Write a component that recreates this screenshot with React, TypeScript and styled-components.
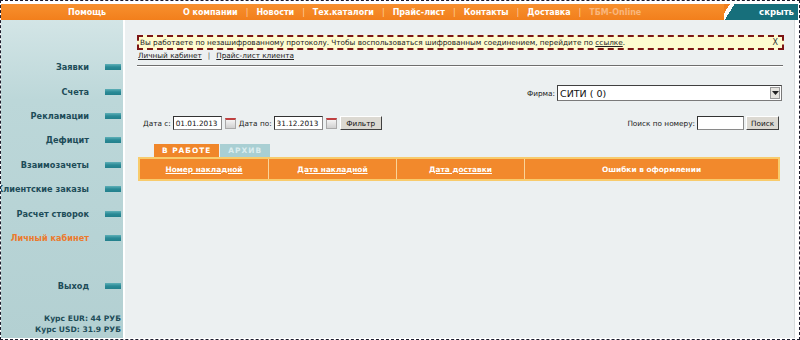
import React from "react";
import styled, { createGlobalStyle } from "styled-components";

const GlobalStyle = createGlobalStyle`
  html, body {
    margin: 0;
    padding: 0;
    background: #ffffff;
  }
  body {
    font-family: "DejaVu Sans", Verdana, sans-serif;
  }
`;

const menu = [
  "О компании",
  "Новости",
  "Тех.каталоги",
  "Прайс-лист",
  "Контакты",
  "Доставка",
];

const sideItems = [
  { title: "Заявки" },
  { title: "Счета" },
  { title: "Рекламации" },
  { title: "Дефицит" },
  { title: "Взаимозачеты" },
  { title: "Клиентские заказы" },
  { title: "Расчет створок" },
  { title: "Личный кабинет", active: true },
];

const columns = [
  { title: "Номер накладной", link: true },
  { title: "Дата накладной", link: true },
  { title: "Дата доставки", link: true },
  { title: "Ошибки в оформлении", link: false },
];

const App = () => {
  return (
    <>
      <GlobalStyle />
      <Frame>
        <TopBar>
          <HelpLink>Помощь</HelpLink>
          <Nav>
            {menu.map((item) => (
              <React.Fragment key={item}>
                <NavItem>{item}</NavItem>
                <NavSep>|</NavSep>
              </React.Fragment>
            ))}
            <NavItem faded>ТБМ-Online</NavItem>
          </Nav>
          <HideTab>скрыть</HideTab>
        </TopBar>

        <Body>
          <Sidebar>
            <SideList>
              {sideItems.map((item) => (
                <SideRow key={item.title}>
                  <SideText active={item.active}>{item.title}</SideText>
                  <Marker />
                </SideRow>
              ))}
              <SideGap />
              <SideRow>
                <SideText>Выход</SideText>
                <Marker />
              </SideRow>
            </SideList>
            <Rates>
              <div>Курс EUR: 44 РУБ</div>
              <div>Курс USD: 31.9 РУБ</div>
            </Rates>
          </Sidebar>

          <Content>
            <Warning>
              <span>
                Вы работаете по незашифрованному протоколу. Чтобы
                воспользоваться шифрованным соединением, перейдите по{" "}
                <u>ссылке</u>.
              </span>
              <Close>X</Close>
            </Warning>

            <Links>
              <u>Личный кабинет</u>
              <LinkSep>|</LinkSep>
              <u>Прайс-лист клиента</u>
            </Links>
            <Rule />

            <FirmRow>
              <Label>Фирма:</Label>
              <Select>
                <span>СИТИ ( 0)</span>
                <SelectArrow>
                  <svg width="7" height="5" viewBox="0 0 7 5">
                    <path d="M0 0 L7 0 L3.5 4 Z" fill="#222" />
                  </svg>
                </SelectArrow>
              </Select>
            </FirmRow>

            <FilterRow>
              <Group>
                <Label>Дата с:</Label>
                <Input width={49}>01.01.2013</Input>
                <CalButton />
                <Label>Дата по:</Label>
                <Input width={49}>31.12.2013</Input>
                <CalButton />
                <Button width={42}>Фильтр</Button>
              </Group>
              <Group>
                <Label>Поиск по номеру:</Label>
                <Input width={47} />
                <Button width={33}>Поиск</Button>
              </Group>
            </FilterRow>

            <Tabs>
              <Tab active>В РАБОТЕ</Tab>
              <Tab>АРХИВ</Tab>
            </Tabs>
            <Table>
              {columns.map((col) => (
                <HeadCell key={col.title} link={col.link}>
                  {col.title}
                </HeadCell>
              ))}
            </Table>
          </Content>
        </Body>
      </Frame>
    </>
  );
};

export default App;

const Frame = styled.div`
  width: 800px;
  height: 340px;
  box-sizing: border-box;
  border: 1px dashed #1c1c2c;
  padding: 3px 1px 1px 0;
  display: flex;
  flex-direction: column;
  overflow: hidden;
`;

const TopBar = styled.div`
  height: 16px;
  display: flex;
  align-items: center;
  background: linear-gradient(#f7902e, #f27f1c);
  color: #ffffff;
  font-weight: bold;
  font-size: 8px;
`;

const HelpLink = styled.div`
  width: 182px;
  box-sizing: border-box;
  padding-left: 67px;
  flex-shrink: 0;
`;

const Nav = styled.div`
  flex: 1;
  display: flex;
  align-items: center;
  gap: 8px;
`;

const NavItem = styled.span<{ faded?: boolean }>`
  color: ${(p) => (p.faded ? "#f9b67c" : "#ffffff")};
  white-space: nowrap;
`;

const NavSep = styled.span`
  color: #fcd0a0;
  font-weight: normal;
`;

const HideTab = styled.div`
  width: 74px;
  height: 100%;
  box-sizing: border-box;
  padding-right: 4px;
  display: flex;
  align-items: center;
  justify-content: flex-end;
  background: linear-gradient(
    122deg,
    #f27f1c 0 5px,
    #ffffff 5px 9px,
    #176f7b 9px
  );
  font-size: 8.5px;
`;

const Body = styled.div`
  flex: 1;
  display: flex;
  min-height: 0;
`;

const Sidebar = styled.div`
  width: 124px;
  flex-shrink: 0;
  border-right: 2px solid #ffffff;
  background: linear-gradient(#d3e5e6 0, #bcd7d9 80px, #b3d0d2 100%);
  display: flex;
  flex-direction: column;
  justify-content: space-between;
  padding: 35px 0 3px;
  box-sizing: border-box;
`;

const SideList = styled.div`
  display: flex;
  flex-direction: column;
`;

const SideRow = styled.div`
  height: 24.4px;
  display: flex;
  align-items: center;
  justify-content: flex-end;
  gap: 16px;
  padding-right: 2px;
`;

const SideText = styled.span<{ active?: boolean }>`
  font-size: 8.2px;
  font-weight: bold;
  white-space: nowrap;
  color: ${(p) => (p.active ? "#ec7a2c" : "#1d4c58")};
`;

const Marker = styled.span`
  width: 16px;
  height: 6px;
  flex-shrink: 0;
  background: linear-gradient(#5fb0b8, #2a8a96 50%, #23808c);
`;

const SideGap = styled.div`
  height: 24px;
`;

const Rates = styled.div`
  text-align: right;
  padding-right: 2px;
  font-size: 7.6px;
  font-weight: bold;
  line-height: 11px;
  color: #1d4c58;
`;

const Content = styled.div`
  flex: 1;
  background: #ecf0f1;
  border-right: 1px solid #d6dbdc;
  margin-right: 3px;
  padding: 15px 10px 0 12px;
  display: flex;
  flex-direction: column;
  font-size: 7.3px;
  color: #222222;
`;

const Warning = styled.div`
  height: 15px;
  box-sizing: border-box;
  border: 2px dashed #7c1414;
  background: #fdfbcf;
  display: flex;
  align-items: center;
  justify-content: space-between;
  padding: 0 4px 0 1px;
  white-space: nowrap;
`;

const Close = styled.span`
  font-size: 8px;
  color: #333;
`;

const Links = styled.div`
  display: flex;
  align-items: center;
  height: 10px;
  padding-left: 1px;
  color: #222;
`;

const LinkSep = styled.span`
  margin: 0 6px;
  color: #555;
`;

const Rule = styled.div`
  height: 1px;
  background: #6e6e6e;
  margin-top: 5px;
  margin-right: 1px;
  box-shadow: 0 1px 0 #ffffff;
`;

const FirmRow = styled.div`
  display: flex;
  justify-content: flex-end;
  align-items: center;
  gap: 2px;
  margin-top: 19px;
  padding-right: 2px;
`;

const Label = styled.span`
  white-space: nowrap;
`;

const Select = styled.div`
  width: 225px;
  height: 16px;
  box-sizing: border-box;
  background: #ffffff;
  border: 1px solid #7a7a7a;
  border-top-color: #404040;
  border-left-color: #404040;
  display: flex;
  align-items: center;
  justify-content: space-between;
  padding: 0 1px 0 2px;
  font-size: 9.5px;
  color: #111;
`;

const SelectArrow = styled.span`
  width: 10px;
  height: 12px;
  box-sizing: border-box;
  background: #e6e4df;
  border: 1px solid #9a9a9a;
  display: flex;
  align-items: center;
  justify-content: center;
`;

const FilterRow = styled.div`
  display: flex;
  justify-content: space-between;
  align-items: center;
  margin-top: 15px;
  padding: 0 5px 0 6px;
`;

const Group = styled.div`
  display: flex;
  align-items: center;
  gap: 2px;
`;

const Input = styled.div<{ width: number }>`
  width: ${(p) => p.width}px;
  height: 14px;
  box-sizing: border-box;
  background: #ffffff;
  border: 1px solid #8a8a8a;
  border-top-color: #333;
  border-left-color: #333;
  padding-left: 2px;
  display: flex;
  align-items: center;
  color: #111;
`;

const CalButton = styled.span`
  width: 11px;
  height: 11px;
  box-sizing: border-box;
  background: linear-gradient(#f4f4f4, #d0d0d0);
  border: 1px solid #a9a9a9;
  border-top: 2px solid #c04040;
  margin: 0 1px 0 1px;
`;

const Button = styled.div<{ width: number }>`
  width: ${(p) => p.width}px;
  height: 14px;
  box-sizing: border-box;
  background: #dcd9d2;
  border: 1px solid #ffffff;
  border-right-color: #404040;
  border-bottom-color: #404040;
  display: flex;
  align-items: center;
  justify-content: center;
  color: #111;
`;

const Tabs = styled.div`
  display: flex;
  gap: 1px;
  margin-top: 14px;
  padding-left: 17px;
`;

const Tab = styled.div<{ active?: boolean }>`
  height: 13px;
  padding: 0 8px;
  display: flex;
  align-items: center;
  font-size: 7.4px;
  font-weight: bold;
  letter-spacing: 1px;
  color: ${(p) => (p.active ? "#ffffff" : "#dcedef")};
  background: ${(p) => (p.active ? "#f0862a" : "#a9cfd3")};
`;

const Table = styled.div`
  display: grid;
  grid-template-columns: 128px 127px 127px 1fr;
  gap: 1px;
  height: 24px;
  box-sizing: border-box;
  margin: 0 4px 0 1px;
  border: 2px solid #f8cb6c;
  background: #f9d49a;
`;

const HeadCell = styled.div<{ link?: boolean }>`
  background: #f2892c;
  color: #ffffff;
  font-size: 7.4px;
  font-weight: bold;
  display: flex;
  align-items: center;
  justify-content: center;
  text-decoration: ${(p) => (p.link ? "underline" : "none")};
`;
